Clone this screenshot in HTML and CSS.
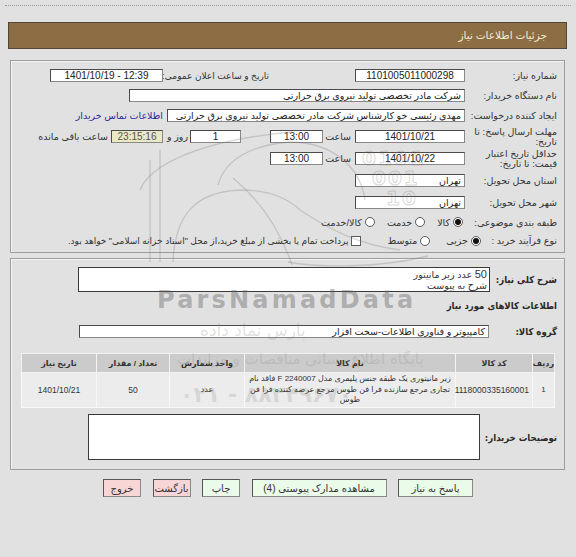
FILE: index.html
```html
<!DOCTYPE html>
<html lang="fa" dir="rtl">
<head>
<meta charset="utf-8">
<title>جزئیات اطلاعات نیاز</title>
<link rel="stylesheet" href="styles.css">
</head>
<body>
<div class="page">
  <div class="topline"></div>
  <div class="titlebar">جزئیات اطلاعات نیاز</div>

  <div class="panel p1">
    <div class="row h19">
      <div class="lbl">شماره نیاز:</div>
      <div class="box w110 c">1101005011000298</div>
      <div class="lbl2">تاریخ و ساعت اعلان عمومی:</div>
      <div class="box w113 c ltr">1401/10/19 - 12:39</div>
    </div>
    <div class="row h20">
      <div class="lbl">نام دستگاه خریدار:</div>
      <div class="box w336">شرکت مادر تخصصی تولید نیروی برق حرارتی</div>
    </div>
    <div class="row h20">
      <div class="lbl">ایجاد کننده درخواست:</div>
      <div class="box w298">مهدی رئیسی خو کارشناس شرکت مادر تخصصی تولید نیروی برق حرارتی</div>
      <a class="link" href="#">اطلاعات تماس خریدار</a>
    </div>
    <div class="row h23">
      <div class="lbl two">مهلت ارسال پاسخ: تا<br>تاریخ:</div>
      <div class="box w110 c">1401/10/21</div>
      <div class="txt saat">ساعت</div>
      <div class="box w53 c">13:00</div>
      <div class="box w51 c day">1</div>
      <div class="txt rooz">روز و</div>
      <div class="box w52 c timer">23:15:16</div>
      <div class="txt remain">ساعت باقی مانده</div>
    </div>
    <div class="row h21">
      <div class="lbl two">حداقل تاریخ اعتبار<br>قیمت: تا تاریخ:</div>
      <div class="box w110 c">1401/10/22</div>
      <div class="txt saat">ساعت</div>
      <div class="box w53 c">13:00</div>
    </div>
    <div class="row h22">
      <div class="lbl">استان محل تحویل:</div>
      <div class="box w110">تهران</div>
    </div>
    <div class="row h22">
      <div class="lbl">شهر محل تحویل:</div>
      <div class="box w110">تهران</div>
    </div>
    <div class="row h18">
      <div class="lbl">طبقه بندی موضوعی:</div>
      <div class="opt first"><span class="radio on"></span><span class="otxt">کالا</span></div>
      <div class="opt gap12"><span class="radio"></span><span class="otxt">خدمت</span></div>
      <div class="opt gap12"><span class="radio"></span><span class="otxt">کالا/خدمت</span></div>
    </div>
    <div class="row h19">
      <div class="lbl narrow">نوع فرآیند خرید :</div>
      <div class="opt first2"><span class="radio on"></span><span class="otxt">جزیی</span></div>
      <div class="opt gap16"><span class="radio"></span><span class="otxt">متوسط</span></div>
      <div class="opt gap26"><span class="check"></span><span class="otxt long">پرداخت تمام یا بخشی از مبلغ خرید،از محل "اسناد خزانه اسلامی" خواهد بود.</span></div>
    </div>
  </div>

  <div class="panel p2">
    <div class="row2 ra">
      <div class="blbl w67">شرح کلی نیاز:</div>
      <div class="tbox w412"><span class="big">50</span> عدد زیر مانیتور<br>شرح به پیوست</div>
    </div>
    <div class="row2 rb">
      <div class="blbl">اطلاعات کالاهای مورد نیاز</div>
    </div>
    <div class="row2 rc">
      <div class="blbl w66">گروه کالا:</div>
      <div class="box w410">کامپیوتر و فناوری اطلاعات-سخت افزار</div>
    </div>
    <table class="items">
      <colgroup>
        <col class="k1"><col class="k2"><col class="k3"><col class="k4"><col class="k5"><col class="k6">
      </colgroup>
      <thead>
        <tr><th>ردیف</th><th>کد کالا</th><th>نام کالا</th><th>واحد شمارش</th><th>تعداد / مقدار</th><th>تاریخ نیاز</th></tr>
      </thead>
      <tbody>
        <tr>
          <td>1</td>
          <td class="num">1118000335160001</td>
          <td class="name">زیر مانیتوری یک طبقه جنس پلیمری مدل F 2240007 فاقد نام تجاری مرجع سازنده فرا فن طوس مرجع عرضه کننده فرا فن طوس</td>
          <td>عدد</td>
          <td class="num">50</td>
          <td class="num">1401/10/21</td>
        </tr>
      </tbody>
    </table>
    <div class="row2 rd">
      <div class="blbl w77">توضیحات خریدار:</div>
      <div class="tbox w392 tall"></div>
    </div>
  </div>

  <div class="buttons">
    <button class="btn green w75">پاسخ به نیاز</button>
    <button class="btn green w135">مشاهده مدارک پیوستی (4)</button>
    <button class="btn green w38">چاپ</button>
    <button class="btn pink w38">بازگشت</button>
    <button class="btn pink w38">خروج</button>
  </div>
</div>

<div class="watermark" aria-hidden="true">
  <svg class="wm-lines" width="576" height="557" viewBox="0 0 576 557">
    <path d="M150 160 L150 262 M160 150 L160 262" />
    <path d="M140 190 C150 165 200 140 292 132" />
    <path d="M173 262 C175 215 195 192 240 190 C265 190 285 196 300 210" />
    <path d="M218 185 C225 160 250 145 290 142 C330 142 360 165 365 200" />
    <path d="M233 178 C260 200 280 230 292 265" />
    <path d="M288 262 C320 268 380 268 428 256" />
    <path d="M300 210 C330 230 360 245 400 250" />
  </svg>
  <div class="wm-digits d1">0101</div>
  <div class="wm-digits d2">001</div>
  <div class="wm-digits d3">10</div>
  <div class="wm-brand">ParsNamadData</div>
  <div class="wm-fa">پارس نماد داده</div>
  <div class="wm-site">پایگاه اطلاع رسانی مناقصات و مزایدات</div>
  <div class="wm-phone">۰۲۱ - ۸۸۳۴۹۶۷۰</div>
</div>
</body>
</html>
```

FILE: styles.css
```css
* { box-sizing: border-box; }
html, body { margin: 0; padding: 0; }
body {
  width: 576px;
  height: 557px;
  overflow: hidden;
  position: relative;
  background: #e1e1e1;
  font-family: "Liberation Sans", "DejaVu Sans", sans-serif;
  font-size: 9.5px;
  color: #2a2a2a;
}
.page { padding-top: 5px; }
.topline { margin: 0 5px; border-top: 1px dotted #9a9a9a; }
.titlebar {
  margin: 16px 9px 0 8px;
  height: 27px;
  background: #8c6d44;
  border: 1px solid #54453a;
  color: #f3ecd8;
  font-size: 10.5px;
  line-height: 25px;
  padding-right: 19px;
}
.panel {
  margin: 11px 11px 0 10px;
  border: 1px solid #9c9c9c;
  box-shadow: inset 1px 1px 0 #f4f4f4;
  padding-right: 7px;
}
.p1 { padding-top: 5px; padding-bottom: 2px; }
.p2 { margin-top: 5px; padding-top: 8px; padding-bottom: 9px; }

.row { display: flex; align-items: center; white-space: nowrap; }
.h18 { height: 18px; }
.h19 { height: 19px; }
.h20 { height: 20px; }
.h21 { height: 21px; }
.h22 { height: 22px; }
.h23 { height: 23px; }

.lbl { width: 90px; flex: none; color: #333; }
.lbl.narrow { width: 74px; }
.lbl.two { line-height: 10px; white-space: nowrap; }
.lbl2 { width: 104px; margin-right: 86px; flex: none; color: #333; font-size: 9px; }

.box {
  flex: none;
  height: 13px;
  margin-right: 2px;
  border: 1px solid #4a4a4a;
  border-right-color: #888;
  border-bottom-color: #888;
  background: #fff;
  font-size: 9.5px;
  line-height: 11px;
  padding: 0 3px;
  white-space: nowrap;
  overflow: hidden;
  color: #222;
}
.c { text-align: center; font-size: 10px; }
.ltr { direction: ltr; }
.w51 { width: 51px; }
.w52 { width: 52px; }
.w53 { width: 53px; }
.w110 { width: 110px; }
.w113 { width: 113px; }
.w298 { width: 298px; }
.w336 { width: 336px; }
.w410 { width: 410px; }

.link { margin-right: 4px; color: #2b2b9c; text-decoration: none; }
.txt { flex: none; color: #333; }
.saat { width: 26px; margin-right: 4px; }
.day { margin-right: 29px; }
.rooz { width: 18px; margin-right: 2px; }
.timer { margin-right: 7px; background: #ebe8c6; color: #555; }
.remain { margin-right: 3px; }

.opt { display: flex; align-items: center; flex: none; }
.opt.first { margin-right: 4px; }
.opt.first2 { margin-right: 2px; }
.opt.gap12 { margin-right: 12px; }
.opt.gap16 { margin-right: 16px; }
.opt.gap26 { margin-right: 26px; }
.otxt { margin-right: 3px; color: #333; }
.otxt.long { font-size: 9px; }
.radio {
  position: relative;
  width: 10px;
  height: 10px;
  border-radius: 50%;
  border: 1px solid #5c5c5c;
  background: #fff;
  flex: none;
}
.radio.on::after {
  content: "";
  position: absolute;
  left: 1px;
  top: 1px;
  width: 6px;
  height: 6px;
  border-radius: 50%;
  background: #111;
}
.check {
  width: 10px;
  height: 10px;
  border: 1px solid #5c5c5c;
  background: #fff;
  flex: none;
}

.row2 { display: flex; align-items: center; white-space: nowrap; }
.ra { height: 25px; }
.rb { height: 18px; margin-top: 4px; }
.rc { height: 22px; margin-top: 6px; }
.rd { height: 46px; margin-top: 6px; }
.blbl {
  flex: none;
  font-family: "DejaVu Sans Condensed", "DejaVu Sans", sans-serif;
  font-stretch: condensed;
  font-weight: bold;
  font-size: 9.5px;
  color: #2a2a2a;
}
.w66 { width: 66px; }
.w67 { width: 67px; }
.w77 { width: 77px; }
.tbox {
  flex: none;
  height: 25px;
  border: 1px solid #3a3a3a;
  background: #fff;
  font-size: 9.5px;
  line-height: 11px;
  padding: 1px 2px;
  color: #333;
}
.tbox .big { font-size: 11px; }
.w412 { width: 412px; }
.w392 { width: 392px; }
.tbox.tall { height: 46px; }

.items {
  width: 533px;
  margin-top: 11px;
  margin-right: 2px;
  border-collapse: collapse;
  table-layout: fixed;
  background: #f4f4f4;
}
.k1 { width: 22px; }
.k2 { width: 77px; }
.k3 { width: 211px; }
.k4 { width: 75px; }
.k5 { width: 73px; }
.k6 { width: 75px; }
.items th {
  height: 19px;
  background: #cbcbcb;
  border: 1px solid #f2f2f2;
  font-size: 8px;
  font-weight: bold;
  color: #333;
  padding: 0;
  text-align: center;
}
.items td {
  height: 35px;
  background: #ececec;
  border: 1px solid #f8f8f8;
  font-size: 8px;
  line-height: 10.5px;
  color: #333;
  text-align: center;
  padding: 0 3px;
}
.items td.num { font-size: 8.5px; }
.items td.name { padding: 1px 3px; }

.buttons {
  display: flex;
  justify-content: center;
  gap: 11.5px;
  margin-top: 9px;
}
.btn {
  height: 18px;
  padding: 0;
  border: 1px solid #555;
  border-right-color: #888;
  border-bottom-color: #888;
  font-family: "Liberation Sans", "DejaVu Sans", sans-serif;
  font-size: 10px;
  color: #333;
  white-space: nowrap;
}
.green { background: #ebfbea; }
.pink { background: #f9d6d6; }
.w38 { width: 38px; }
.w75 { width: 75px; }
.w135 { width: 135px; }

.watermark {
  position: absolute;
  left: 0;
  top: 0;
  width: 576px;
  height: 557px;
  pointer-events: none;
  direction: ltr;
}
.wm-lines { position: absolute; left: 0; top: 0; }
.wm-lines path { fill: none; stroke: rgba(120,120,120,0.28); stroke-width: 1.3; }
.wm-digits {
  position: absolute;
  font-family: "DejaVu Sans", sans-serif;
  font-weight: bold;
  font-size: 20px;
  color: transparent;
  -webkit-text-stroke: 1px rgba(120,120,120,0.3);
  letter-spacing: 2px;
}
.d1 { left: 362px; top: 146px; }
.d2 { left: 372px; top: 166px; }
.d3 { left: 386px; top: 186px; }
.wm-brand {
  position: absolute;
  left: 157px;
  top: 286px;
  font-family: "DejaVu Sans", sans-serif;
  font-weight: bold;
  font-size: 24px;
  letter-spacing: 3.2px;
  color: rgba(100,100,100,0.42);
}
.wm-fa {
  position: absolute;
  left: 200px;
  top: 320px;
  font-family: "DejaVu Sans", sans-serif;
  font-size: 17px;
  color: rgba(120,120,120,0.22);
  direction: rtl;
}
.wm-site {
  position: absolute;
  left: 177px;
  top: 350px;
  font-family: "DejaVu Sans", sans-serif;
  font-size: 15px;
  color: rgba(120,120,120,0.2);
  direction: rtl;
}
.wm-phone {
  position: absolute;
  left: 180px;
  top: 382px;
  font-family: "DejaVu Sans", sans-serif;
  font-weight: bold;
  font-size: 22px;
  color: rgba(120,120,120,0.2);
}
```
